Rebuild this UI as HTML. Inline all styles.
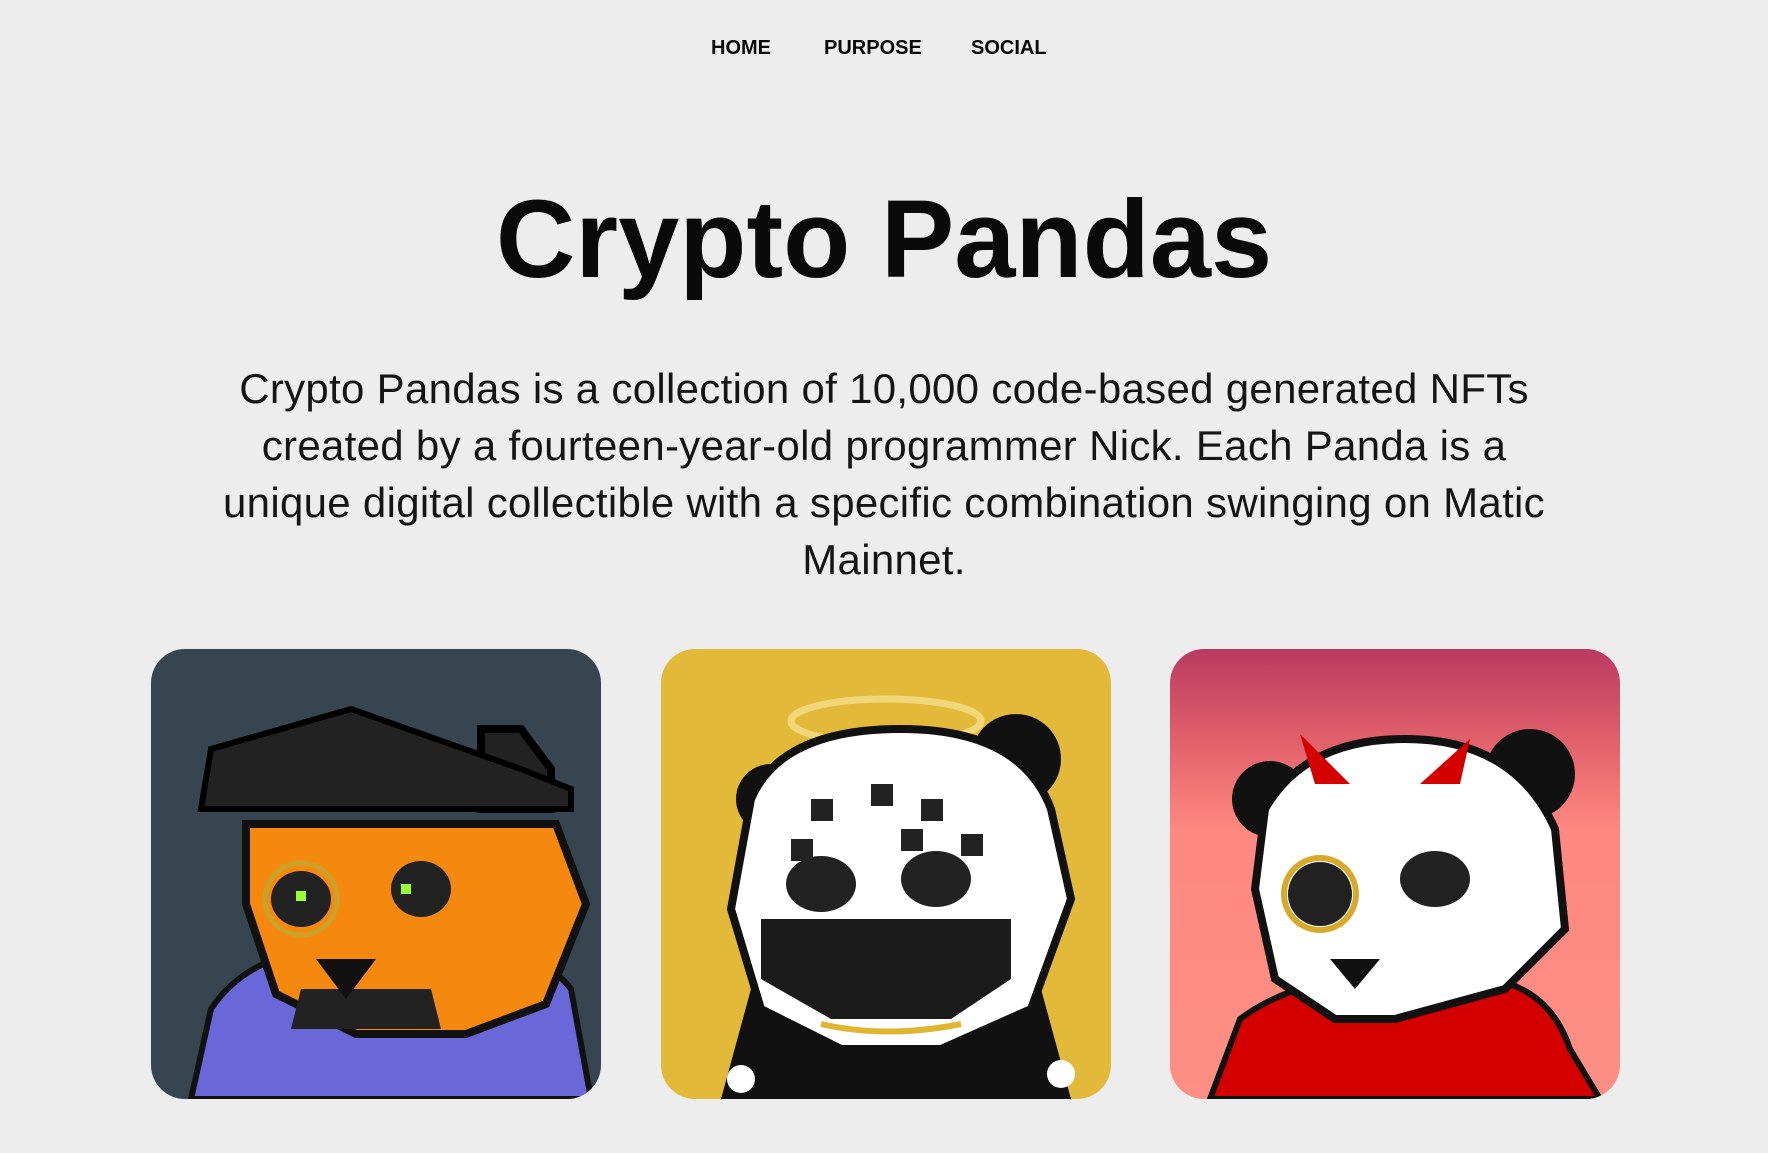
<!DOCTYPE html>
<html><head><meta charset="utf-8"><style>
html,body{margin:0;padding:0;background:#ededed;width:1768px;height:1153px;overflow:hidden;font-family:"Liberation Sans",sans-serif;color:#0a0a0a}
nav{position:absolute;top:37px;left:0;width:1768px;text-align:center;font-weight:bold;font-size:20px}
nav span{position:absolute;top:0}
h1{position:absolute;top:175px;left:0;width:1768px;text-align:center;margin:0;font-size:110px;font-weight:bold;line-height:130px;letter-spacing:0px}
p{position:absolute;top:360px;left:0;width:1768px;text-align:center;margin:0;font-size:42px;line-height:57px;color:#151515;letter-spacing:0.3px}
.card{position:absolute;top:649px;width:450px;height:450px;border-radius:34px;overflow:hidden}
.card svg{display:block}
</style></head><body>
<nav><span style="left:711px">HOME</span><span style="left:824px">PURPOSE</span><span style="left:971px">SOCIAL</span></nav>
<h1>Crypto Pandas</h1>
<p>Crypto Pandas is a collection of 10,000 code-based generated NFTs<br>created by a fourteen-year-old programmer Nick. Each Panda is a<br>unique digital collectible with a specific combination swinging on Matic<br>Mainnet.</p>

<div class="card" style="left:151px;background:#36454f">
<svg width="450" height="450" viewBox="0 0 450 450">
<path d="M330 80 h40 l30 40 v40 h-70z" fill="#222" stroke="#000" stroke-width="8"/>
<path d="M60 360 q40-60 130-60 h120 q80 0 110 40 l20 110 H40z" fill="#6a68d8" stroke="#111" stroke-width="6"/>
<path d="M95 175 h310 l30 80 -40 100 -80 30 h-110 l-80-40 -30-90z" fill="#f5890f" stroke="#111" stroke-width="8"/>
<path d="M150 340 h130 l10 40 h-150z" fill="#222"/>
<path d="M60 100 l140-40 170 60 50 20 v20 H50z" fill="#222" stroke="#000" stroke-width="6"/>
<ellipse cx="150" cy="250" rx="30" ry="28" fill="#222"/><circle cx="150" cy="250" r="36" fill="none" stroke="#c9a227" stroke-width="5"/>
<ellipse cx="270" cy="240" rx="30" ry="28" fill="#222"/>
<rect x="145" y="242" width="10" height="10" fill="#9f3"/><rect x="250" y="235" width="10" height="10" fill="#9f3"/>
<path d="M165 310 h60 l-30 40z" fill="#111"/>
</svg></div>

<div class="card" style="left:661px;background:#e3b93a">
<svg width="450" height="450" viewBox="0 0 450 450">
<ellipse cx="225" cy="72" rx="95" ry="22" fill="none" stroke="#f2d77a" stroke-width="7"/>
<circle cx="110" cy="150" r="35" fill="#111"/><circle cx="355" cy="110" r="45" fill="#111"/>
<path d="M60 450 l30-110 h290 l30 110z" fill="#111"/>
<path d="M90 150 q30-70 150-70 q120 0 150 80 l20 90 -40 110 -90 40 h-100 l-80-40 -30-100z" fill="#fff" stroke="#111" stroke-width="8"/>
<path d="M100 270 h250 v60 l-60 40 h-120 l-70-40z" fill="#1b1b1b"/>
<ellipse cx="160" cy="235" rx="35" ry="28" fill="#222"/><ellipse cx="275" cy="230" rx="35" ry="28" fill="#222"/>
<g fill="#222"><rect x="150" y="150" width="22" height="22"/><rect x="210" y="135" width="22" height="22"/><rect x="260" y="150" width="22" height="22"/><rect x="300" y="185" width="22" height="22"/><rect x="130" y="190" width="22" height="22"/><rect x="240" y="180" width="22" height="22"/></g>
<path d="M160 375 q65 15 140 0" stroke="#e0b530" stroke-width="6" fill="none"/>
<circle cx="80" cy="430" r="14" fill="#fff"/><circle cx="400" cy="425" r="14" fill="#fff"/>
</svg></div>

<div class="card" style="left:1170px;background:linear-gradient(#b93a62 0%,#e0606a 20%,#ff8880 40%,#fd8f84 100%)">
<svg width="450" height="450" viewBox="0 0 450 450">
<circle cx="100" cy="150" r="38" fill="#111"/><circle cx="360" cy="125" r="45" fill="#111"/>
<path d="M40 450 l30-80 q40-30 100-40 h150 q60 10 80 70 l30 50z" fill="#d40000" stroke="#111" stroke-width="6"/>
<path d="M95 160 q40-70 140-70 q110 0 150 90 l10 100 -60 60 -110 30 h-60 l-60-40 -20-90z" fill="#fff" stroke="#111" stroke-width="8"/>
<path d="M130 85 l15 50 h35z" fill="#d40000"/><path d="M300 90 l-10 45 h-40z" fill="#d40000"/>
<ellipse cx="150" cy="245" rx="32" ry="32" fill="#222"/><circle cx="150" cy="245" r="36" fill="none" stroke="#d9aa2a" stroke-width="6"/>
<ellipse cx="265" cy="230" rx="35" ry="28" fill="#222"/>
<path d="M160 310 h50 l-25 30z" fill="#111"/>
</svg></div>
</body></html>
